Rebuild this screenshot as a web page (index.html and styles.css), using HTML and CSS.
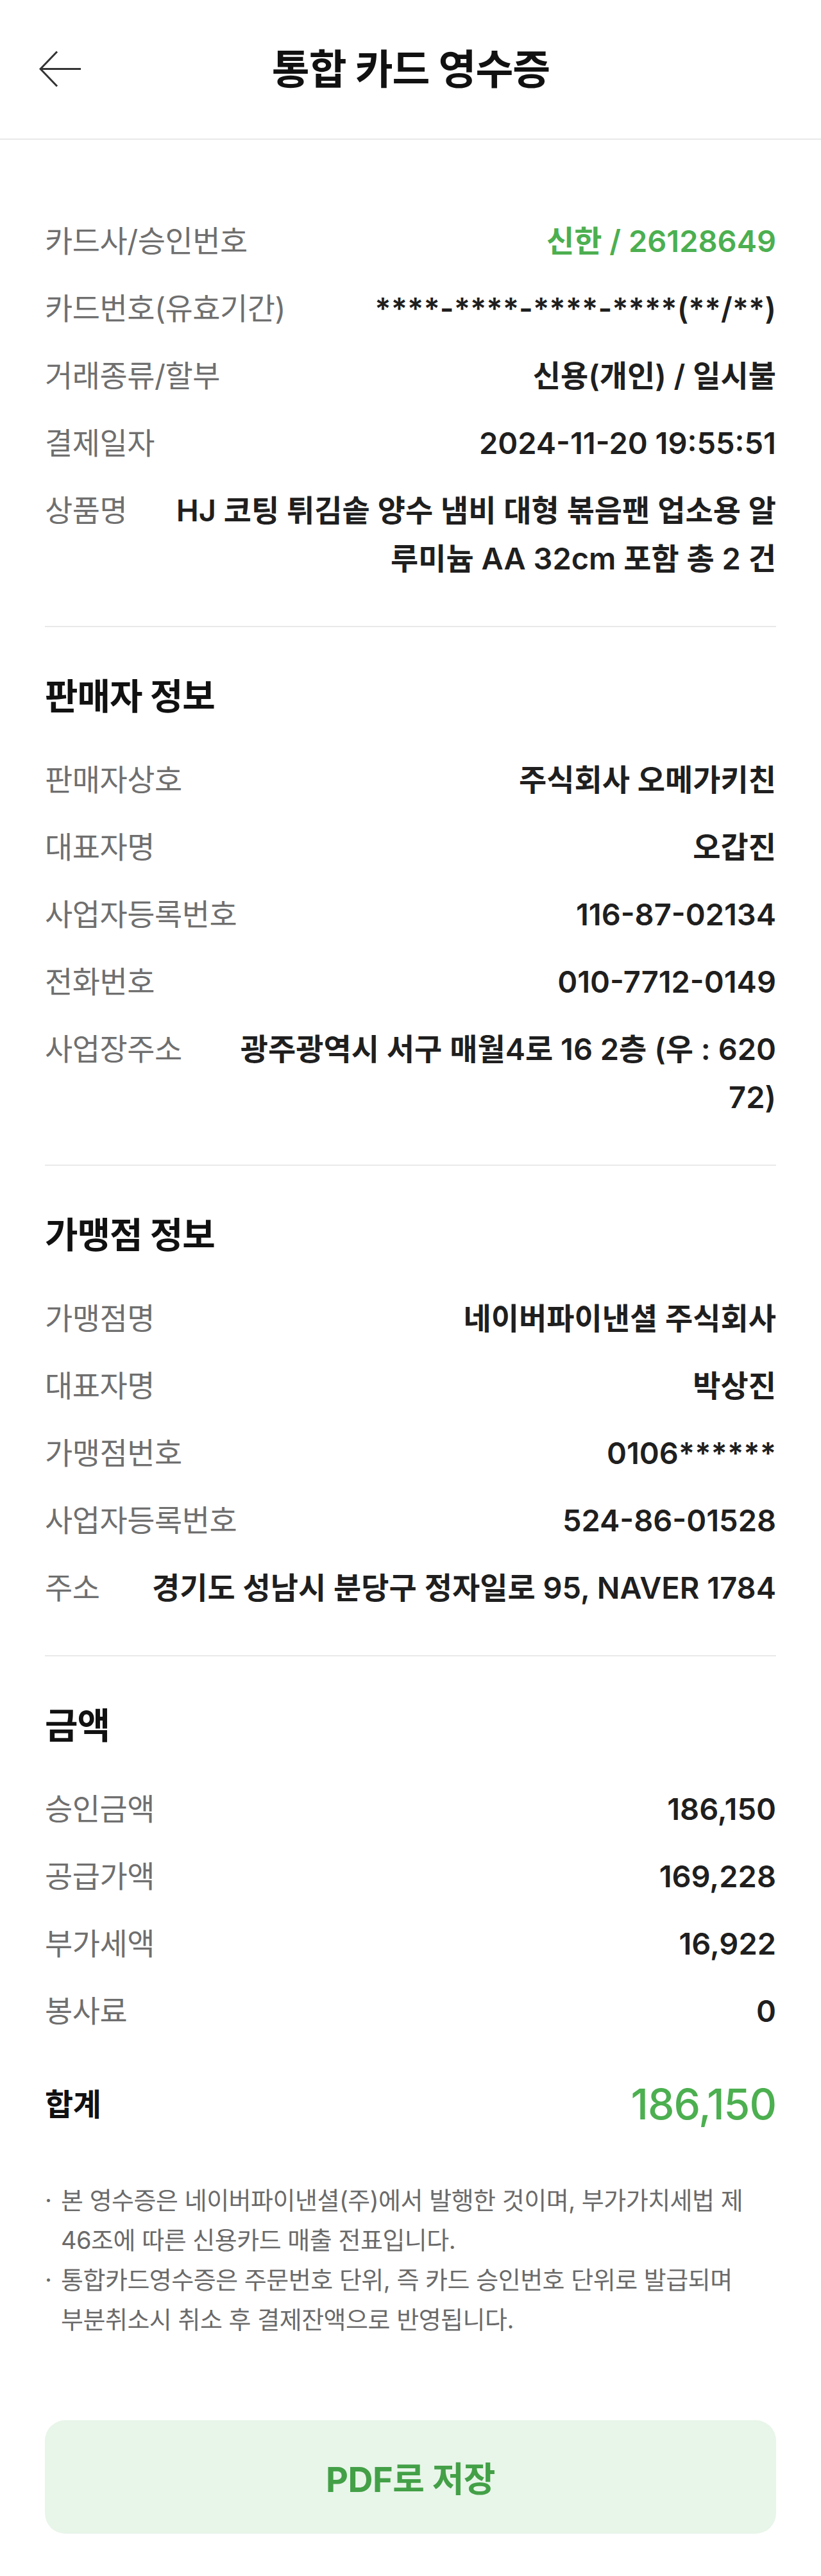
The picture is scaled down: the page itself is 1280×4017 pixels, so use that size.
FILE: index.html
```html
<!DOCTYPE html>
<html lang="ko">
<head>
<meta charset="utf-8">
<title>통합 카드 영수증</title>
<link rel="stylesheet" href="styles.css">
</head>
<body>
<header class="topbar">
  <button class="back" aria-label="뒤로">
    <svg width="66" height="58" viewBox="0 0 66 58"><path d="M28 1.5 L2 28.5 L28 55.5 M2 28.5 H65" fill="none" stroke="#333" stroke-width="3"/></svg>
  </button>
  <h1 class="title">통합 카드 영수증</h1>
  <span class="spacer"></span>
</header>

<main class="content">
  <section class="section first">
    <div class="rows">
      <div class="row"><span class="label">카드사/승인번호</span><span class="value green">신한 / 26128649</span></div>
      <div class="row"><span class="label">카드번호(유효기간)</span><span class="value">****-****-****-****(**/**)</span></div>
      <div class="row"><span class="label">거래종류/할부</span><span class="value">신용(개인) / 일시불</span></div>
      <div class="row"><span class="label">결제일자</span><span class="value">2024-11-20 19:55:51</span></div>
      <div class="row"><span class="label">상품명</span><span class="value">HJ 코팅 튀김솥 양수 냄비 대형 볶음팬 업소용 알루미늄 AA 32cm 포함 총 2 건</span></div>
    </div>
  </section>

  <section class="section">
    <h2 class="section-title">판매자 정보</h2>
    <div class="rows">
      <div class="row"><span class="label">판매자상호</span><span class="value">주식회사 오메가키친</span></div>
      <div class="row"><span class="label">대표자명</span><span class="value">오갑진</span></div>
      <div class="row"><span class="label">사업자등록번호</span><span class="value">116-87-02134</span></div>
      <div class="row"><span class="label">전화번호</span><span class="value">010-7712-0149</span></div>
      <div class="row"><span class="label">사업장주소</span><span class="value">광주광역시 서구 매월4로 16 2층 (우 : 62072)</span></div>
    </div>
  </section>

  <section class="section">
    <h2 class="section-title">가맹점 정보</h2>
    <div class="rows">
      <div class="row"><span class="label">가맹점명</span><span class="value">네이버파이낸셜 주식회사</span></div>
      <div class="row"><span class="label">대표자명</span><span class="value">박상진</span></div>
      <div class="row"><span class="label">가맹점번호</span><span class="value">0106******</span></div>
      <div class="row"><span class="label">사업자등록번호</span><span class="value">524-86-01528</span></div>
      <div class="row"><span class="label">주소</span><span class="value">경기도 성남시 분당구 정자일로 95, NAVER 1784</span></div>
    </div>
  </section>

  <section class="section last">
    <h2 class="section-title">금액</h2>
    <div class="rows">
      <div class="row"><span class="label">승인금액</span><span class="value">186,150</span></div>
      <div class="row"><span class="label">공급가액</span><span class="value">169,228</span></div>
      <div class="row"><span class="label">부가세액</span><span class="value">16,922</span></div>
      <div class="row"><span class="label">봉사료</span><span class="value">0</span></div>
      <div class="row total"><span class="label">합계</span><span class="value green">186,150</span></div>
    </div>
  </section>

  <ul class="notes">
    <li><span class="dot">·</span><span>본 영수증은 네이버파이낸셜(주)에서 발행한 것이며, 부가가치세법 제 46조에 따른 신용카드 매출 전표입니다.</span></li>
    <li><span class="dot">·</span><span>통합카드영수증은 주문번호 단위, 즉 카드 승인번호 단위로 발급되며 부분취소시 취소 후 결제잔액으로 반영됩니다.</span></li>
  </ul>

  <button class="pdf-btn">PDF로 저장</button>
</main>
</body>
</html>
```

FILE: styles.css
```css
* { box-sizing: border-box; }

html, body {
  margin: 0;
  padding: 0;
  background: #ffffff;
}

body {
  font-family: Inter, "Noto Sans CJK KR", "Noto Sans", sans-serif;
  color: #1d1d1d;
}

.topbar {
  height: 218px;
  display: grid;
  grid-template-columns: 1fr auto 1fr;
  align-items: center;
  padding: 0 60px 0 61px;
  border-bottom: 2px solid #e8e8e8;
}

.back {
  justify-self: start;
  background: none;
  border: 0;
  padding: 0;
  margin: 0;
  display: flex;
  align-items: center;
}

.title {
  margin: 0;
  font-size: 64px;
  font-weight: 700;
  color: #111;
  letter-spacing: -1px;
  line-height: 1;
}

.content {
  padding: 0 70px 69px;
}

.section {
  padding: 78px 0 68px;
  border-bottom: 2px solid #e9e9e9;
}

.section.first {
  padding-top: 120px;
}

.section.last {
  border-bottom: 0;
  padding-bottom: 0;
}

.section-title {
  margin: 0 0 62px;
  font-size: 56px;
  line-height: 60px;
  font-weight: 700;
  color: #111;
  letter-spacing: -1px;
}

.rows {
  display: flex;
  flex-direction: column;
  gap: 30px;
}

.row {
  display: flex;
  justify-content: space-between;
  align-items: flex-start;
  gap: 72px;
  line-height: 75px;
}

.label {
  flex: none;
  white-space: nowrap;
  font-size: 47px;
  color: #6f6f6f;
  letter-spacing: -0.5px;
}

.value {
  text-align: right;
  word-break: break-all;
  font-size: 47px;
  font-weight: 600;
  color: #1f1f1f;
  letter-spacing: 0;
}

.green {
  color: #4caf50;
}

.row.total {
  margin-top: 41px;
  align-items: center;
}

.row.total .label {
  font-size: 48px;
  font-weight: 700;
  color: #111;
}

.row.total .value {
  font-size: 66px;
  font-weight: 500;
  color: #4caf50;
  letter-spacing: -1px;
}

.notes {
  list-style: none;
  margin: 81px 0 0;
  padding: 0;
  font-size: 38px;
  line-height: 62px;
  color: #6a6a6a;
  letter-spacing: -0.5px;
  word-break: keep-all;
}

.notes li {
  display: flex;
}

.dot {
  flex: none;
  width: 25px;
}

.pdf-btn {
  display: block;
  width: 100%;
  height: 177px;
  margin-top: 126px;
  border: 0;
  border-radius: 32px;
  background: #e8f5e9;
  color: #43a047;
  font-family: Inter, "Noto Sans CJK KR", sans-serif;
  font-size: 54px;
  font-weight: 700;
  letter-spacing: -0.5px;
}
```
